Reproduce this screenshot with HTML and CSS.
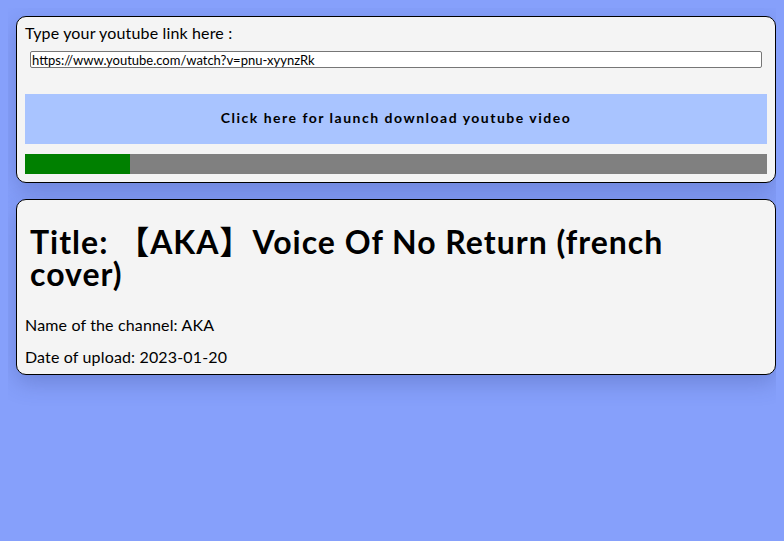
FILE: index.html
```html
<!DOCTYPE html>
<html>
<head>
<meta charset="utf-8">
<link rel="stylesheet" href="styles.css">
</head>
<body>
<section class="card card-form">
  <label class="label" for="link">Type your youtube link here :</label>
  <input class="link-input" id="link" type="text" value="https://www.youtube.com/watch?v=pnu-xyynzRk">
  <button class="launch">Click here for launch download youtube video</button>
  <div class="progress"><div class="progress-fill" style="width:14.2%"></div></div>
</section>
<section class="card card-info">
  <h1 class="title">Title: 【AKA】Voice Of No Return (french cover)</h1>
  <p class="meta">Name of the channel: AKA</p>
  <p class="meta">Date of upload: 2023-01-20</p>
</section>
</body>
</html>
```
FILE: styles.css
```css
html, body {
  height: 100%;
}
body {
  margin: 8px;
  background: #86a0fb;
  font-family: Lato, "Noto Sans CJK JP", sans-serif;
  color: #000;
}
.card {
  margin: 8px 0 0 8px;
  background: #f4f4f4;
  border: 1px solid #000;
  border-radius: 10px;
  box-shadow: 0 8px 22px rgba(40, 50, 120, 0.25);
  padding: 8px;
}
.card-form {
  display: flex;
  flex-direction: column;
}
.label {
  font-size: 16px;
  line-height: 16px;
  letter-spacing: 0.15px;
}
.link-input {
  margin: 10px 5px 0 5px;
  height: 17px;
  box-sizing: border-box;
  border: 1px solid #767676;
  border-radius: 2px;
  background: #fff;
  font-family: Lato, sans-serif;
  font-size: 13px;
  padding: 0 1px;
}
.launch {
  margin-top: 26px;
  height: 50px;
  border: none;
  background: #a9c4ff;
  font-family: Lato, sans-serif;
  font-weight: bold;
  font-size: 14px;
  letter-spacing: 1.5px;
  color: #000;
  padding: 0 0 4px;
}
.progress {
  margin-top: 10px;
  height: 20px;
  background: #808080;
  display: flex;
}
.progress-fill {
  background: #008000;
}
.card-info {
  margin-top: 16px;
  padding: 8px 8px 9px;
}
.title {
  font-size: 32px;
  line-height: 32px;
  font-weight: bold;
  letter-spacing: 1px;
  margin: 18px 5px 27px;
}
.meta {
  font-size: 16px;
  line-height: 16px;
  letter-spacing: 0.15px;
  margin: 0 0 16px;
}
.meta:last-child {
  margin-bottom: 0;
}
```
